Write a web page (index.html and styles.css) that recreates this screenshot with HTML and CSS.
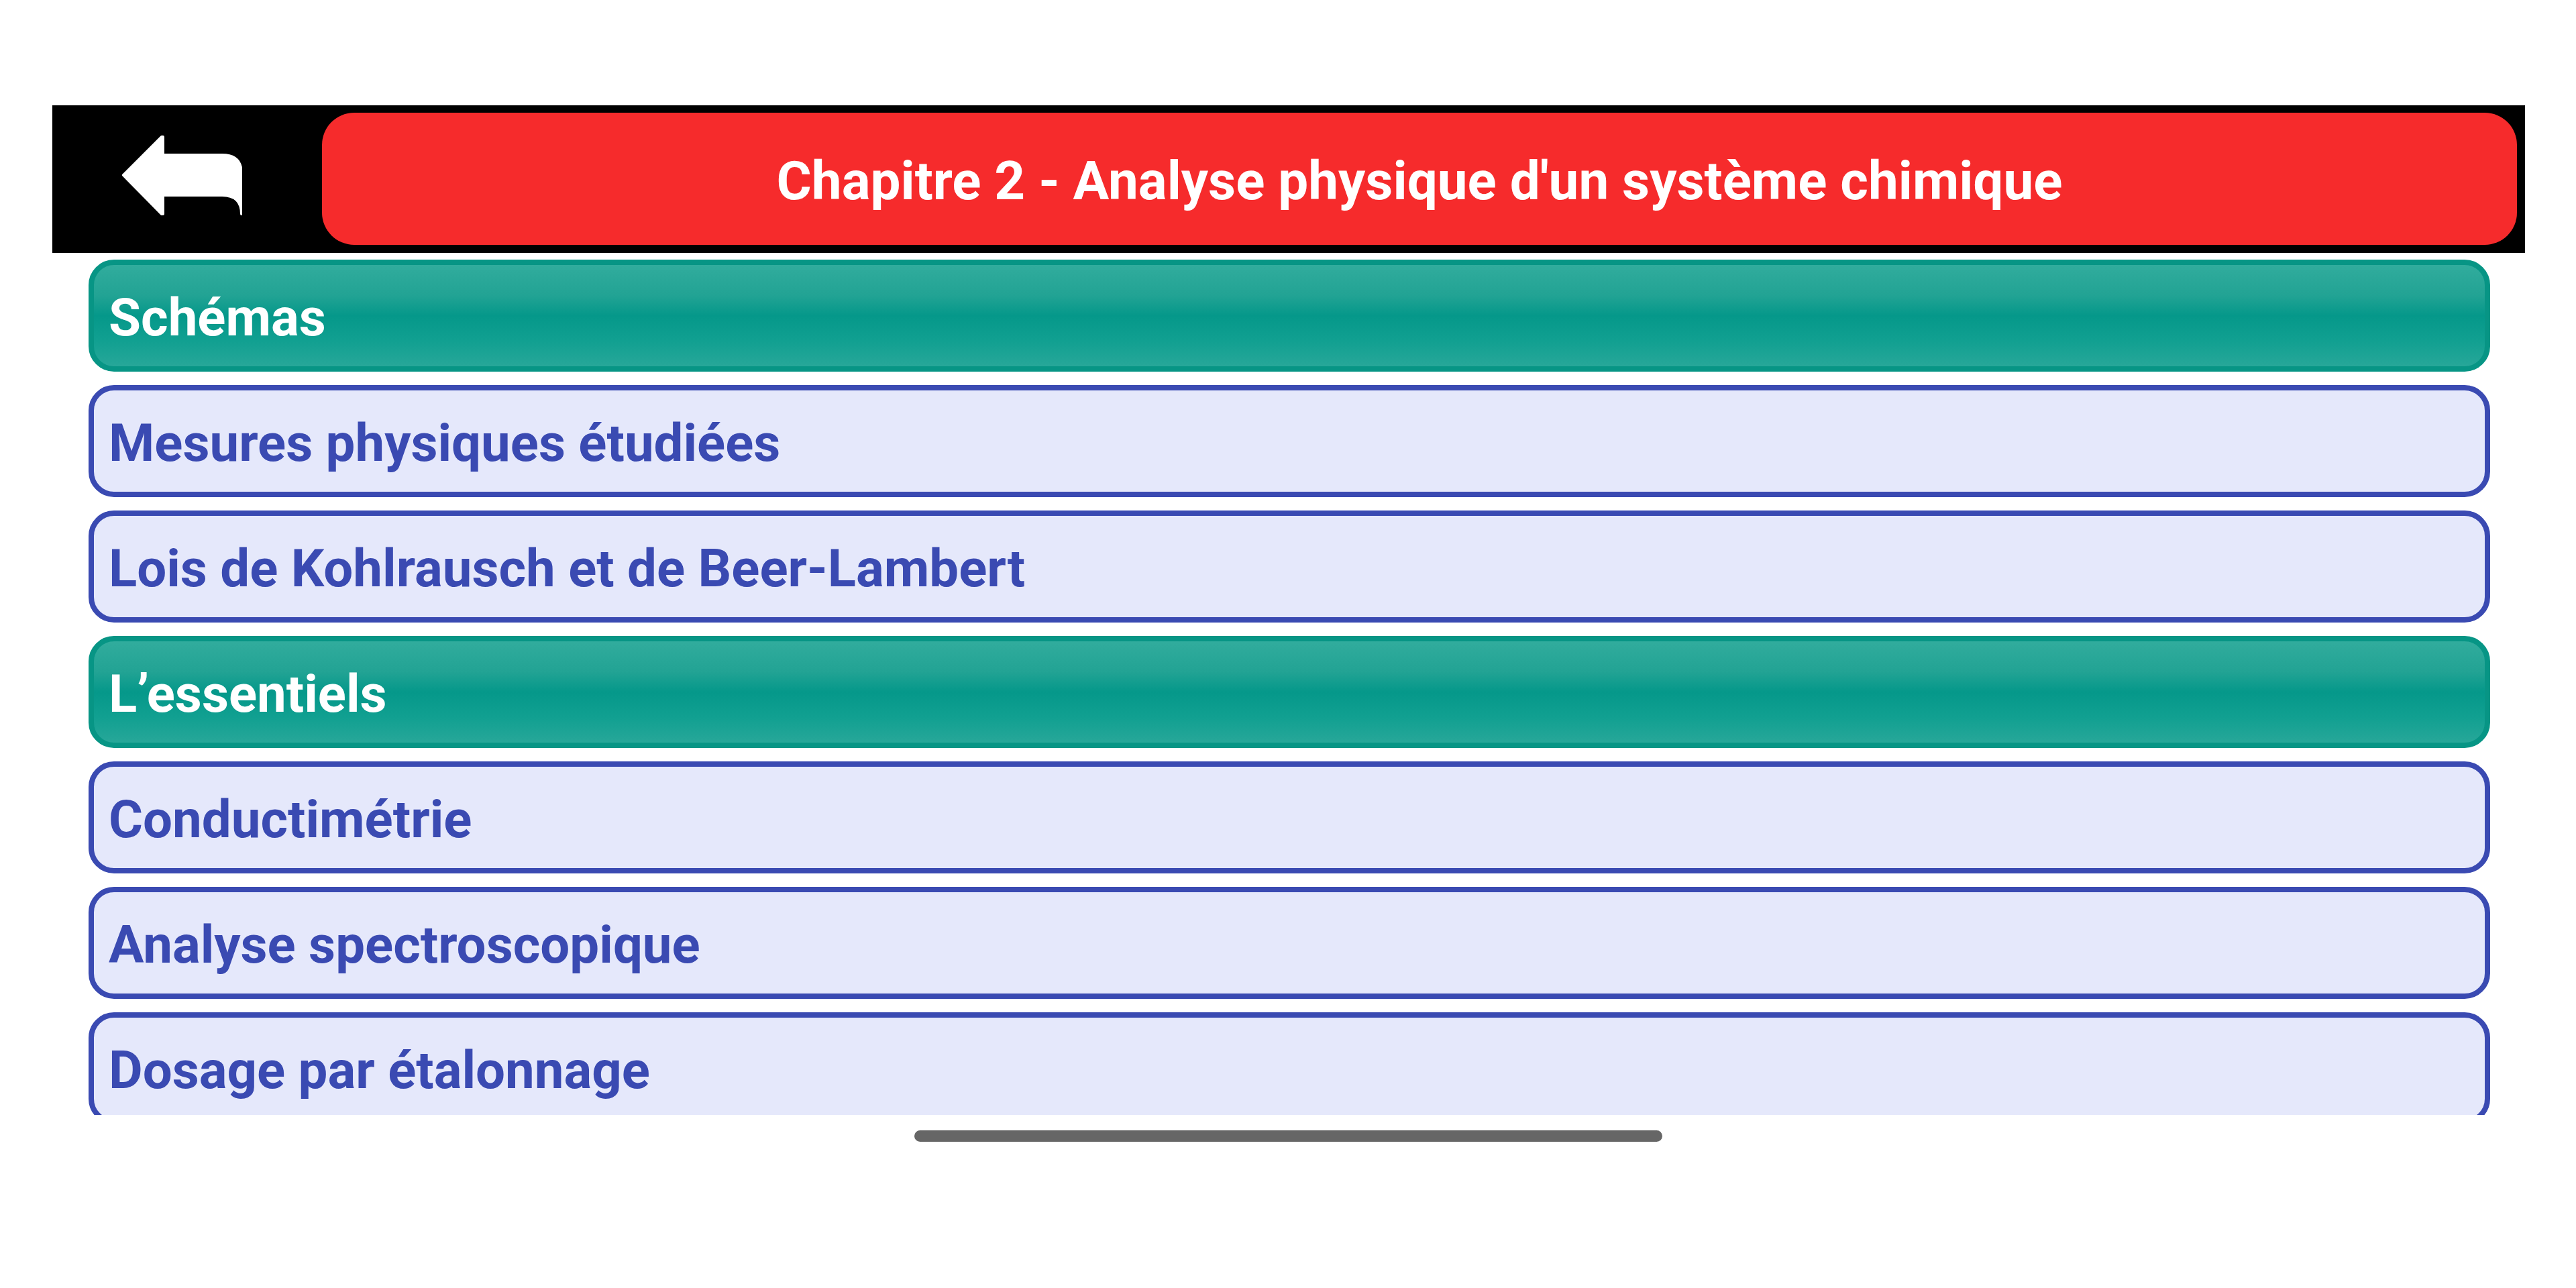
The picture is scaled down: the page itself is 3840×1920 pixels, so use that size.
FILE: index.html
```html
<!DOCTYPE html>
<html lang="fr">
<head>
    <meta charset="UTF-8">
    <meta name="viewport" content="width=device-width, initial-scale=1.0">
    <title>Chapitre 2 - Analyse physique d'un système chimique</title>
    <link rel="stylesheet" href="styles.css">
</head>
<body>
    <div class="screen">
        <header class="topbar">
            <div class="back-btn">
                <svg class="back-icon" viewBox="0 0 180 122" width="180" height="122">
                    <path d="M3,60 L60,3 L62,3 L62,30 L150,30 Q179,30 179,58 L179,118 Q179,90 150,90 L62,90 L62,118 L60,118 Z" fill="#fff" stroke="#fff" stroke-width="4" stroke-linejoin="round"/>
                </svg>
            </div>
            <div class="title-box">
                <h1 class="title">Chapitre 2 - Analyse physique d'un système chimique</h1>
            </div>
        </header>
        <main class="menu">
            <div class="menu-item section">Schémas</div>
            <div class="menu-item">Mesures physiques étudiées</div>
            <div class="menu-item">Lois de Kohlrausch et de Beer-Lambert</div>
            <div class="menu-item section">L’essentiels</div>
            <div class="menu-item">Conductimétrie</div>
            <div class="menu-item">Analyse spectroscopique</div>
            <div class="menu-item">Dosage par étalonnage</div>
        </main>
        <div class="home-bar"></div>
    </div>
</body>
</html>
```

FILE: styles.css
```css
body {
    margin: 0;
    padding: 0;
    background: #fff;
    font-family: Roboto, "Noto Sans", Arial, sans-serif;
}

.screen {
    width: 3840px;
    height: 1920px;
    padding-top: 157px;
    box-sizing: border-box;
}

.topbar {
    display: flex;
    height: 220px;
    margin: 0 76px 0 78px;
    padding: 11px 12px 12px 0;
    box-sizing: border-box;
    background: #000;
}

.back-btn {
    width: 402px;
    flex-shrink: 0;
    display: flex;
    align-items: center;
    padding-left: 103px;
    box-sizing: border-box;
}

.back-icon {
    display: block;
    margin-top: -10px;
}

.title-box {
    flex: 1;
    display: flex;
    align-items: center;
    justify-content: center;
    background: #f62b2c;
    border-radius: 48px;
}

.title {
    margin: 0;
    color: #fff;
    font-size: 80px;
    font-weight: 700;
    padding-top: 6px;
}

.menu {
    display: flex;
    flex-direction: column;
    gap: 20px;
    height: 1275px;
    margin: 10px 128px 0 132px;
    overflow: hidden;
}

.menu-item {
    flex-shrink: 0;
    height: 167px;
    display: flex;
    align-items: center;
    padding: 6px 0 0 22px;
    box-sizing: border-box;
    border: 8px solid #3a4ab2;
    border-radius: 38px;
    background: #e5e8fb;
    color: #3a4ab2;
    font-size: 78px;
    font-weight: 700;
}

.menu-item.section {
    border-color: #079585;
    background: linear-gradient(#31ac9d 0%, #22a394 30%, #05988a 50%, #11a091 75%, #27a799 100%);
    color: #fff;
}

.home-bar {
    width: 1115px;
    height: 17px;
    margin: 23px auto 0;
    border-radius: 9px;
    background: #666;
}
```
